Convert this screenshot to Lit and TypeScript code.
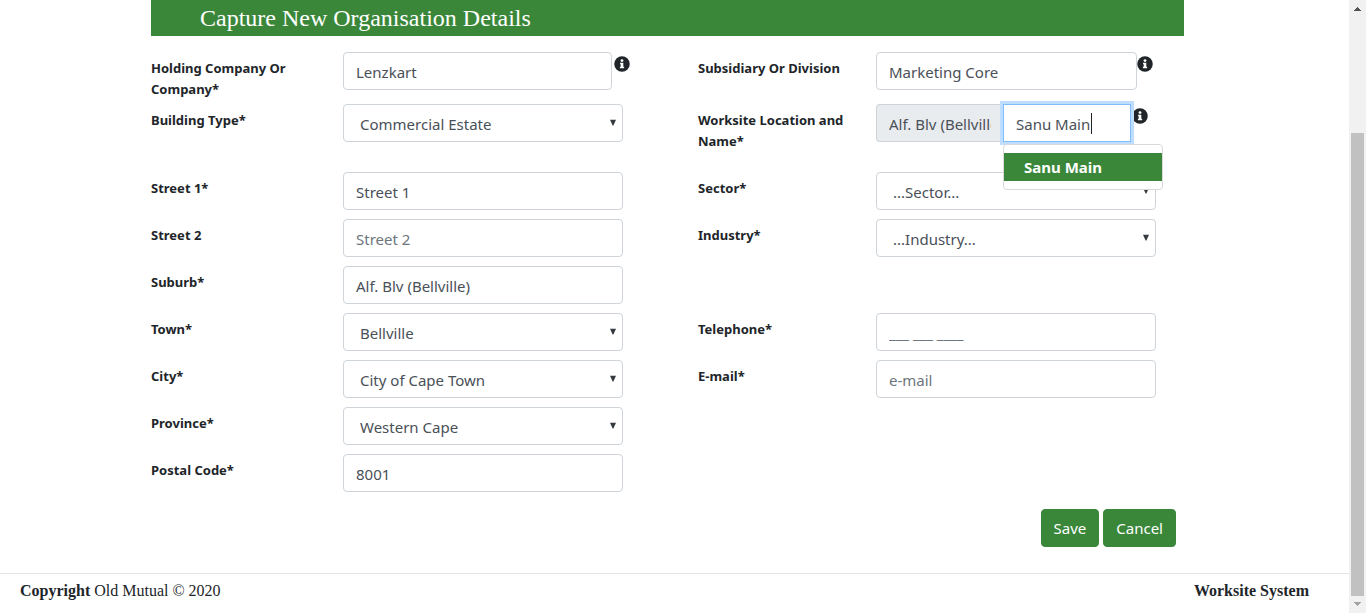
import { LitElement, html, css, svg, nothing } from "lit";
import { customElement, property } from "lit/decorators.js";

const infoIcon = html`<svg class="info" viewBox="0 0 16 16" role="img" aria-label="Information">
  ${svg`<circle cx="8" cy="8" r="7.75" fill="#212529"></circle>
  <circle cx="8" cy="4.6" r="1.4" fill="#fff"></circle>
  <path d="M6.1 6.7h3.2v4.1h.8v1.5H5.9v-1.5h.8V8.2h-.6z" fill="#fff"></path>`}
</svg>`;

const fieldStyles = css`
  * {
    box-sizing: border-box;
  }
  :host {
    display: grid;
    grid-template-columns: subgrid;
    align-items: start;
  }
  .label {
    padding: 6px 24px 0 0;
    color: #212529;
    font: 700 13px/21px "Noto Sans", "Open Sans", sans-serif;
  }
  .control {
    display: block;
    width: 100%;
    height: 38px;
    margin: 0;
    padding: 8px 12px 6px;
    border: 1px solid #ced4da;
    border-radius: 4px;
    background: #fff;
    color: #495057;
    font-family: "Noto Sans", "Open Sans", sans-serif;
    font-size: 15px;
    line-height: 22px;
    outline: 0;
  }
  .control::placeholder {
    color: #6c757d;
    opacity: 1;
  }
  .info {
    display: block;
    flex: none;
    width: 16px;
    height: 16px;
    margin-top: 4px;
  }
`;

@customElement("form-field")
export class FormField extends LitElement {
  @property() label = "";
  @property() kind = "text";
  @property() value = "";
  @property() placeholder = "";
  @property() info = "";

  static styles = [
    fieldStyles,
    css`
      .holder {
        position: relative;
        display: flex;
      }
      .info-outside {
        gap: 2px;
        margin-right: -7px;
      }
      .info-inside {
        margin-right: 3px;
      }
      .select {
        appearance: none;
        padding-left: 16px;
        padding-right: 24px;
      }
      .arrow {
        position: absolute;
        right: 7px;
        top: 15px;
        width: 6px;
        height: 7px;
        pointer-events: none;
      }
    `,
  ];

  private control() {
    if (this.kind === "select") {
      return html`<select class="control select" id="field">
          <option selected>${this.value}</option>
        </select>
        <svg class="arrow" viewBox="0 0 6 7" aria-hidden="true">
          <path d="M0 .8h6L3.4 6.6h-.8z" fill="#343a40"></path>
        </svg>`;
    }
    return html`<input
      class="control"
      id="field"
      type=${this.kind}
      .value=${this.value}
      placeholder=${this.placeholder}
    />`;
  }

  render() {
    return html`
      <label class="label" for="field">${this.label}</label>
      <div class="holder ${this.info ? `info-${this.info}` : ""}">
        ${this.control()} ${this.info ? infoIcon : nothing}
      </div>
    `;
  }
}

@customElement("worksite-field")
export class WorksiteField extends LitElement {
  static styles = [
    fieldStyles,
    css`
      .holder {
        display: flex;
        padding-right: 8px;
      }
      .prefix {
        flex: 1 1 0;
        min-width: 0;
        border-right: 0;
        border-radius: 4px 0 0 4px;
        background: #e9ecef;
      }
      .entry {
        position: relative;
        flex: none;
        width: 128px;
        margin-right: 1px;
      }
      .active {
        border-color: #80bdff;
        border-radius: 0;
        box-shadow: 0 0 0 3px #bfdeff;
        caret-color: transparent;
      }
      .caret {
        position: absolute;
        left: 88px;
        top: 9px;
        width: 1px;
        height: 21px;
        background: #212529;
      }
      .menu {
        position: absolute;
        z-index: 2;
        left: 0;
        top: 40px;
        width: 160px;
        margin: 0;
        padding: 8px 0;
        border: 1px solid #d9d9d9;
        border-radius: 4px;
        background: #fff;
        list-style: none;
      }
      .option {
        display: block;
        width: 100%;
        height: 28px;
        padding: 0 20px;
        border: 0;
        background: #3a873a;
        color: #fff;
        font: 700 15px/28px "Noto Sans", "Open Sans", sans-serif;
        text-align: left;
      }
    `,
  ];

  render() {
    return html`
      <label class="label" for="name">Worksite Location and Name*</label>
      <div class="holder">
        <input class="control prefix" aria-label="Worksite location" readonly .value=${"Alf. Blv (Bellville)"} />
        <div class="entry">
          <input class="control active" id="name" type="text" autocomplete="off" .value=${"Sanu Main"} />
          <span class="caret"></span>
          <ul class="menu">
            <li><button class="option" type="button">Sanu Main</button></li>
          </ul>
        </div>
        ${infoIcon}
      </div>
    `;
  }
}

@customElement("app-root")
export class AppRoot extends LitElement {
  static styles = css`
    * {
      box-sizing: border-box;
    }
    :host {
      display: flex;
      height: 100vh;
      overflow: hidden;
      background: #fff;
      color: #212529;
    }
    .page {
      display: flex;
      flex: 1;
      flex-direction: column;
      min-width: 0;
    }
    .content {
      flex: 1;
      padding: 0 165px 0 151px;
    }
    .title {
      height: 36px;
      margin: 0 0 16px;
      padding-left: 49px;
      background: #3a873a;
      color: #fff;
      font: 400 24px/36px "Liberation Serif", serif;
    }
    .form {
      display: grid;
      grid-template-columns: 192fr 280fr 75fr 178fr 280fr 28fr;
      grid-template-rows: 52px 68px;
      grid-auto-rows: 47px;
    }
    .left {
      grid-column: 1 / 3;
    }
    .right {
      grid-column: 4 / 6;
    }
    .actions {
      display: flex;
      justify-content: flex-end;
      gap: 4px;
      padding: 8px 8px 0 0;
    }
    .button {
      height: 38px;
      padding: 0 12px;
      border: 1px solid #3a873a;
      border-radius: 4px;
      background: #3a873a;
      color: #fff;
      font: 400 15px/36px "Noto Sans", "Open Sans", sans-serif;
    }
    .footer {
      display: flex;
      justify-content: space-between;
      height: 40px;
      padding: 5px 40px 0 20px;
      border-top: 1px solid #e5e5e5;
      font: 16px/24px "Liberation Serif", serif;
    }
    .scroll {
      display: flex;
      flex: none;
      flex-direction: column;
      align-items: center;
      width: 17px;
      background: #f1f1f1;
    }
    .cap {
      flex: none;
      width: 17px;
      height: 17px;
    }
    .before {
      flex: 116;
    }
    .thumb {
      flex: 463;
      width: 13px;
      background: #c1c1c1;
    }
  `;

  render() {
    return html`
      <main class="page">
        <div class="content">
          <h1 class="title">Capture New Organisation Details</h1>
          <form>
            <div class="form">
              <form-field class="left" label="Holding Company Or Company*" value="Lenzkart" info="outside"></form-field>
              <form-field class="right" label="Subsidiary Or Division" value="Marketing Core" info="inside"></form-field>
              <form-field class="left" label="Building Type*" kind="select" value="Commercial Estate"></form-field>
              <worksite-field class="right"></worksite-field>
              <form-field class="left" label="Street 1*" value="Street 1"></form-field>
              <form-field class="right" label="Sector*" kind="select" value="...Sector..."></form-field>
              <form-field class="left" label="Street 2" placeholder="Street 2"></form-field>
              <form-field class="right" label="Industry*" kind="select" value="...Industry..."></form-field>
              <form-field class="left" label="Suburb*" value="Alf. Blv (Bellville)"></form-field>
              <form-field class="left" label="Town*" kind="select" value="Bellville"></form-field>
              <form-field class="right" label="Telephone*" kind="tel" placeholder="___ ___ ____"></form-field>
              <form-field class="left" label="City*" kind="select" value="City of Cape Town"></form-field>
              <form-field class="right" label="E-mail*" kind="email" placeholder="e-mail"></form-field>
              <form-field class="left" label="Province*" kind="select" value="Western Cape"></form-field>
              <form-field class="left" label="Postal Code*" value="8001"></form-field>
            </div>
            <div class="actions">
              <button class="button" type="button">Save</button>
              <button class="button" type="button">Cancel</button>
            </div>
          </form>
        </div>
        <footer class="footer">
          <span><b>Copyright</b> Old Mutual © 2020</span>
          <b>Worksite System</b>
        </footer>
      </main>
      <div class="scroll" aria-hidden="true">
        <svg class="cap" viewBox="0 0 17 17"><path d="M5 11h7v-1h-1V9h-1V8H9V7H8v1H7v1H6v1H5z" fill="#505050"></path></svg>
        <div class="before"></div>
        <div class="thumb"></div>
        <svg class="cap" viewBox="0 0 17 17"><path d="M5 6h7v1h-1v1h-1v1H9v1H8V9H7V8H6V7H5z" fill="#a3a3a3"></path></svg>
      </div>
    `;
  }
}
